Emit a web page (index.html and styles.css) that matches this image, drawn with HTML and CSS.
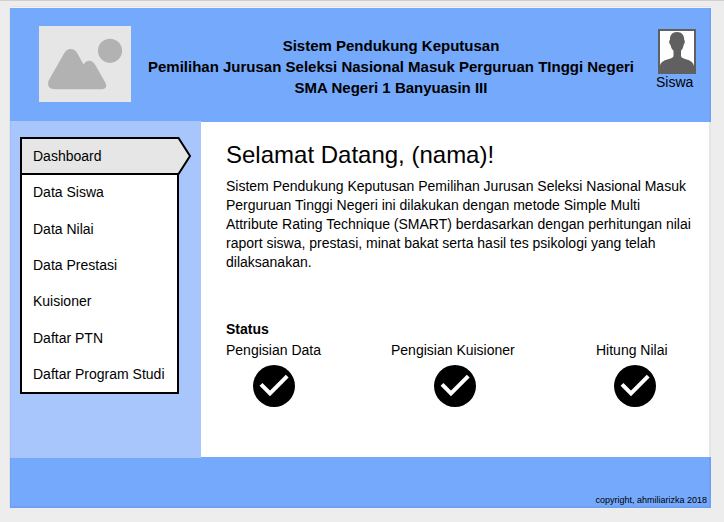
FILE: index.html
```html
<!DOCTYPE html>
<html lang="id">
<head>
<meta charset="utf-8">
<title>Sistem Pendukung Keputusan</title>
<link rel="stylesheet" href="styles.css">
</head>
<body>
<div class="page">
  <header class="header">
    <svg class="logo" viewBox="0 0 92 76" aria-hidden="true">
      <rect width="92" height="76" fill="#e6e6e6"/>
      <circle cx="71" cy="24.8" r="12.1" fill="#b2b2b2"/>
      <path fill="#b2b2b2" d="M16 63.300C10 63.300 7.500 59 10.200 53.500L24.500 28.500C28 21.300 35.500 21.300 39 28.500L44.500 38.500C47 33.500 53 33.300 56 38.500L66 56C68.500 60.500 67 63.300 62 63.300Z"/>
    </svg>
    <h1 class="heading">Sistem Pendukung Keputusan<br>Pemilihan Jurusan Seleksi Nasional Masuk Perguruan TInggi Negeri<br>SMA Negeri 1 Banyuasin III</h1>
    <div class="user">
      <svg class="avatar" viewBox="0 0 38 45" aria-hidden="true">
        <rect x="1" y="1" width="36" height="43" fill="#fff" stroke="#606060" stroke-width="2"/>
        <path fill="#606060" d="M19 3C23.800 3 26.500 6.300 26.200 11C27.300 11.500 26.800 15 25.600 16C25.200 18.500 24.500 20 23 21.700V27C23.500 31 35 29.500 36 37V44H2V37C3 29.500 14.800 31 15.500 27V21.700C13.800 20 13 18.500 12.600 16C11.200 15 10.600 11.500 12 11C11.700 6.300 14.200 3 19 3Z"/>
      </svg>
      <span>Siswa</span>
    </div>
  </header>
  <div class="body">
    <aside class="sidebar">
      <nav class="menu">
        <a class="item active">
          <svg class="tab" viewBox="0 0 172 38" aria-hidden="true"><path d="M1 1H158.500L170 19L158.500 37H1Z" fill="#e6e6e6" stroke="#000" stroke-width="2"/></svg>
          <span class="label">Dashboard</span>
        </a>
        <a class="item">Data Siswa</a>
        <a class="item">Data Nilai</a>
        <a class="item">Data Prestasi</a>
        <a class="item">Kuisioner</a>
        <a class="item">Daftar PTN</a>
        <a class="item">Daftar Program Studi</a>
      </nav>
    </aside>
    <main class="content">
      <h2 class="welcome">Selamat Datang, (nama)!</h2>
      <p class="intro">Sistem Pendukung Keputusan Pemilihan Jurusan Seleksi Nasional Masuk<br>Perguruan Tinggi Negeri ini dilakukan dengan metode Simple Multi<br>Attribute Rating Technique (SMART) berdasarkan dengan perhitungan nilai<br>raport siswa, prestasi, minat bakat serta hasil tes psikologi yang telah<br>dilaksanakan.</p>
      <h3 class="status-title">Status</h3>
      <div class="statuses">
        <div class="status data"><span>Pengisian Data</span>
          <svg class="check" viewBox="0 0 42 42"><circle cx="21" cy="21" r="21"/><path d="M8 19.400L17 28.400L34.200 11.200" fill="none" stroke="#fff" stroke-width="4"/></svg></div>
        <div class="status survey"><span>Pengisian Kuisioner</span>
          <svg class="check" viewBox="0 0 42 42"><circle cx="21" cy="21" r="21"/><path d="M8 19.400L17 28.400L34.200 11.200" fill="none" stroke="#fff" stroke-width="4"/></svg></div>
        <div class="status score"><span>Hitung Nilai</span>
          <svg class="check" viewBox="0 0 42 42"><circle cx="21" cy="21" r="21"/><path d="M8 19.400L17 28.400L34.200 11.200" fill="none" stroke="#fff" stroke-width="4"/></svg></div>
      </div>
    </main>
  </div>
  <footer class="footer">copyright, ahmiliarizka 2018</footer>
</div>
</body>
</html>
```
FILE: styles.css
```css
* { box-sizing: border-box; }
body {
  margin: 0;
  height: 522px;
  overflow: hidden;
  padding: 7px 0 0 10px;
  border-top: 1px solid #d0d0d0;
  background: #ededed;
  color: #000;
  font: 14px/19px "Liberation Sans", Arial, sans-serif;
}
.page {
  width: 701px;
  height: 500px;
  display: flex;
  flex-direction: column;
  background: #fff;
  box-shadow: 0 -1px 0 #f4f4f4, 0 -2px 0 #e3e3e3, -1px 0 0 #e3e3e3;
}
.header {
  height: 114px;
  flex: none;
  display: flex;
  align-items: flex-start;
  background: #74a9fc;
  border-right: 2px solid #6ea3f7;
}
.logo { width: 92px; height: 76px; margin: 18px 17px 0 29px; }
.heading {
  width: 486px;
  margin: 27px 0 0;
  text-align: center;
  white-space: nowrap;
  font-size: 15px;
  line-height: 21px;
}
.user { margin: 21px 0 0 22px; display: flex; flex-direction: column; }
.avatar { width: 38px; height: 45px; margin-left: 2px; }
.user span { line-height: 17px; }
.body { height: 335px; flex: none; display: flex; border-right: 2px solid #e6e6e6; }
.sidebar {
  width: 191px;
  height: 337px;
  flex: none;
  margin-top: -1px;
  padding: 16px 0 0 9px;
  background: #a8c6fb;
  border-left: 1px solid #9fbff6;
  z-index: 1;
}
.menu {
  width: 159px;
  height: 257px;
  border: 2px solid #000;
  background: #fff;
}
.item {
  display: block;
  position: relative;
  height: 36.400px;
  padding: 0 0 0 11px;
  line-height: 36px;
  white-space: nowrap;
}
.item.active { line-height: 35px; height: 35.200px; }
.tab { position: absolute; left: -2px; top: -2px; width: 172px; height: 38px; }
.label { position: relative; }
.content { padding: 19px 0 0 25px; }
.welcome { margin: 0 0 8px; font-weight: 400; font-size: 24px; line-height: 28px; }
.intro { margin: 0; white-space: nowrap; }
.status-title { margin: 47px 0 0; font-size: 14px; line-height: 20px; }
.statuses { display: grid; grid-template-columns: 165px 205px 72px; }
.status { line-height: 22px; white-space: nowrap; }
.check { display: block; width: 42px; height: 42px; margin-top: 4px; }
.data .check { margin-left: 27px; }
.survey .check { margin-left: 43px; }
.score .check { margin-left: 18px; }
.footer {
  height: 51px;
  padding: 38px 2px 0 0;
  background: #74a9fc;
  border: solid #6ea1f3;
  border-width: 0 2px 2px 1px;
  text-align: right;
  font-size: 9px;
  line-height: 11px;
}
```
